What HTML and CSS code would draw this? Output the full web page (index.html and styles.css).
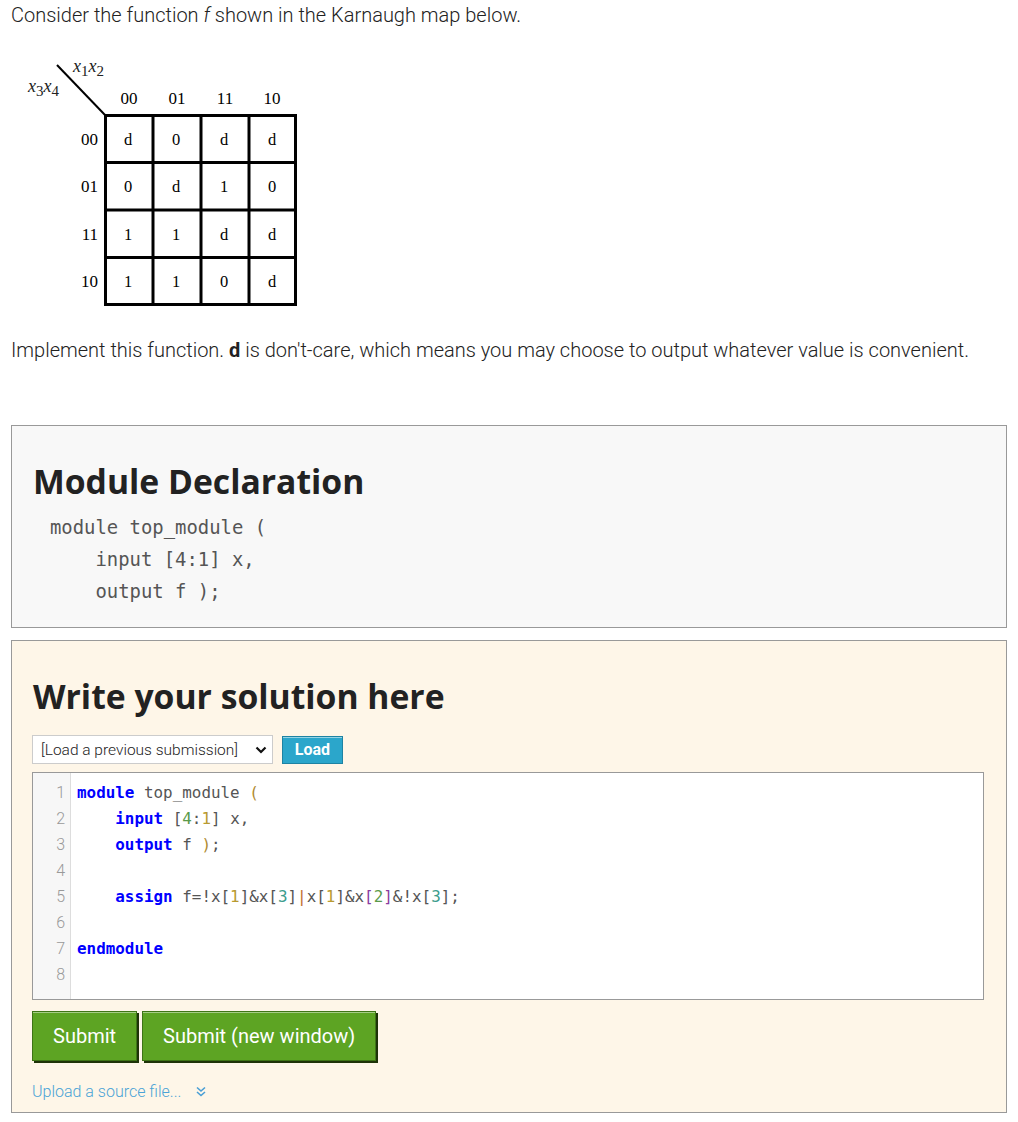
FILE: index.html
```html
<!DOCTYPE html>
<html>
<head>
<meta charset="utf-8">
<title>Karnaugh map</title>
<link rel="stylesheet" href="styles.css">
</head>
<body>
<p class="intro">Consider the function <i>f</i> shown in the Karnaugh map below.</p>

<div class="kmap">
<svg width="290" height="260" viewBox="0 0 290 260" xmlns="http://www.w3.org/2000/svg">
  <line x1="37" y1="15" x2="85" y2="65" stroke="#000" stroke-width="2"/>
  <text class="lbl" x="53" y="22">x<tspan class="sub" dy="4">1</tspan><tspan dy="-4">x</tspan><tspan class="sub" dy="4">2</tspan></text>
  <text class="lbl" x="8" y="42">x<tspan class="sub" dy="4">3</tspan><tspan dy="-4">x</tspan><tspan class="sub" dy="4">4</tspan></text>
  <g class="hdr" text-anchor="middle">
    <text x="109" y="54">00</text><text x="157" y="54">01</text><text x="205" y="54">11</text><text x="252" y="54">10</text>
  </g>
  <g class="hdr" text-anchor="end">
    <text x="78" y="95">00</text><text x="78" y="142">01</text><text x="78" y="190">11</text><text x="78" y="237">10</text>
  </g>
  <g class="cell" text-anchor="middle">
    <text x="108" y="95">d</text><text x="156" y="95">0</text><text x="204" y="95">d</text><text x="252" y="95">d</text>
    <text x="108" y="142">0</text><text x="156" y="142">d</text><text x="204" y="142">1</text><text x="252" y="142">0</text>
    <text x="108" y="190">1</text><text x="156" y="190">1</text><text x="204" y="190">d</text><text x="252" y="190">d</text>
    <text x="108" y="237">1</text><text x="156" y="237">1</text><text x="204" y="237">0</text><text x="252" y="237">d</text>
  </g>
  <g stroke="#000" stroke-width="3" fill="none">
    <rect x="85.5" y="65.5" width="190" height="189"/>
    <line x1="133" y1="65" x2="133" y2="255"/>
    <line x1="181" y1="65" x2="181" y2="255"/>
    <line x1="229" y1="65" x2="229" y2="255"/>
    <line x1="85" y1="112.5" x2="276" y2="112.5"/>
    <line x1="85" y1="160" x2="276" y2="160"/>
    <line x1="85" y1="207.5" x2="276" y2="207.5"/>
  </g>
</svg>
</div>

<p class="desc">Implement this function. <b>d</b> is don't-care, which means you may choose to output whatever value is convenient.</p>

<div class="panel decl">
  <h2>Module Declaration</h2>
<pre class="decl-code">module top_module (
    input [4:1] x,
    output f );</pre>
</div>

<div class="panel solution">
  <h2>Write your solution here</h2>
  <div class="loadrow">
    <div class="selectwrap">
      <select class="prev"><option>[Load a previous submission]</option></select>
      <svg class="chev" width="12" height="8" viewBox="0 0 12 8"><path d="M1.5 1.5 L6 6 L10.5 1.5" stroke="#111" stroke-width="2.2" fill="none"/></svg>
    </div>
    <button class="loadbtn">Load</button>
  </div>
  <div class="editor">
    <div class="gutter">
      <div>1</div><div>2</div><div>3</div><div>4</div><div>5</div><div>6</div><div>7</div><div>8</div>
    </div>
    <div class="code">
      <div class="ln"><span class="kw">module</span> top_module <span class="br1">(</span></div>
      <div class="ln">    <span class="kw">input</span> [<span class="n4">4</span>:<span class="n1">1</span>] x,</div>
      <div class="ln">    <span class="kw">output</span> f <span class="br1">)</span>;</div>
      <div class="ln"> </div>
      <div class="ln">    <span class="kw">assign</span> f=!x[<span class="n1">1</span>]&amp;x[<span class="n3">3</span>]<span class="op">|</span>x[<span class="n1">1</span>]&amp;x<span class="br2">[</span><span class="n4">2</span><span class="br2">]</span>&amp;!x[<span class="n3">3</span>];</div>
      <div class="ln"> </div>
      <div class="ln"><span class="kw">endmodule</span></div>
      <div class="ln"> </div>
    </div>
  </div>
  <div class="btnrow">
    <button class="submit">Submit</button>
    <button class="submit">Submit (new window)</button>
  </div>
  <div class="upload">
    <a class="uplink">Upload a source file...</a>
    <svg class="dchev" width="12" height="12" viewBox="0 0 12 12"><path d="M2 1.5 L6 5 L10 1.5 M2 6 L6 9.5 L10 6" stroke="#4a9fd5" stroke-width="1.6" fill="none"/></svg>
  </div>
</div>
</body>
</html>
```

FILE: styles.css
```css
html, body {
  margin: 0;
  padding: 0;
  background: #fff;
}
body {
  padding: 0 11px 0 11px;
  font-family: Roboto, "Liberation Sans", sans-serif;
  font-weight: 300;
  font-size: 20px;
  color: #222;
}
.intro {
  margin: 0;
  line-height: 30px;
}
.kmap {
  margin: 20px 0 0 9px;
  height: 260px;
}
.kmap svg {
  display: block;
}
.kmap text {
  font-family: "Liberation Serif", serif;
  fill: #000;
}
.kmap .lbl {
  font-size: 18px;
  font-style: italic;
  fill: #222;
}
.kmap .lbl .sub {
  font-style: normal;
  font-size: 15px;
}
.kmap .hdr {
  font-size: 17px;
}
.kmap .cell {
  font-size: 16.5px;
}
.desc {
  margin: 25px 0 0 0;
  line-height: 30px;
}
.desc b {
  font-weight: 700;
}
.panel {
  border: 1px solid #999;
  padding: 20px 21px 20px 20px;
  margin-top: 60px;
}
.decl {
  background: #f8f8f8;
}
.solution {
  background: #fef6e8;
  margin-top: 12px;
  padding-bottom: 10px;
}
h2 {
  font-family: "Open Sans", sans-serif;
  font-weight: 700;
  font-size: 33.7px;
  line-height: 42px;
  color: #222;
  margin: 14px 0 0 1px;
}
.decl-code {
  margin: 9px 0 0 18px;
  font-family: "DejaVu Sans Mono", monospace;
  font-size: 18.9px;
  line-height: 32px;
  color: #555;
}
.loadrow {
  display: flex;
  align-items: center;
  gap: 9px;
  margin-top: 18px;
}
.selectwrap {
  position: relative;
  width: 241px;
  height: 29px;
}
.prev {
  appearance: none;
  -webkit-appearance: none;
  width: 100%;
  height: 29px;
  border: 1px solid #ccc;
  background: #fff;
  font-family: Roboto, sans-serif;
  font-weight: 300;
  font-size: 15.5px;
  color: #222;
  padding: 0 0 0 8px;
  margin: 0;
  border-radius: 0;
}
.chev {
  position: absolute;
  right: 6px;
  top: 11px;
}
.loadbtn {
  width: 61px;
  height: 28px;
  background: #2ba6cb;
  border: 1px solid #1e83a3;
  box-shadow: inset 0 1px 0 rgba(255,255,255,0.5);
  color: #fff;
  font-family: Roboto, sans-serif;
  font-weight: 700;
  font-size: 16px;
  padding: 0;
}
.editor {
  display: flex;
  border: 1px solid #999;
  background: #fff;
  height: 226px;
  margin-top: 8px;
  margin-right: 1px;
  font-family: "DejaVu Sans Mono", monospace;
  font-size: 15.9px;
  line-height: 26px;
}
.gutter {
  width: 32px;
  padding: 7px 5px 0 0;
  text-align: right;
  color: #999;
  background: #f7f7f7;
  border-right: 1px solid #ddd;
  font-family: Roboto, sans-serif;
  font-weight: 300;
  font-size: 16px;
}
.code {
  padding: 7px 0 0 6px;
  color: #555;
}
.ln {
  white-space: pre;
  height: 26px;
}
.kw {
  color: #0000ff;
  font-weight: 700;
}
.n1 { color: #b89a30; }
.n3 { color: #3c9c8c; }
.n4 { color: #5a9a4a; }
.br1 { color: #b08a30; }
.br2 { color: #8a3aa0; }
.op { color: #c07030; }
.btnrow {
  display: flex;
  gap: 5px;
  margin-top: 11px;
}
.submit {
  height: 50px;
  background: #5da423;
  border: 1px solid #3e7416;
  box-shadow: inset 0 1px 0 rgba(255,255,255,0.45), 2px 2px 0 #1e3308;
  color: #fff;
  font-family: Roboto, sans-serif;
  font-weight: 400;
  font-size: 20px;
  padding: 0 20px;
}
.upload {
  display: flex;
  align-items: center;
  gap: 14px;
  margin-top: 21px;
}
.uplink {
  color: #4aa3d6;
  font-size: 16px;
  font-weight: 300;
  line-height: 20px;
}
```
